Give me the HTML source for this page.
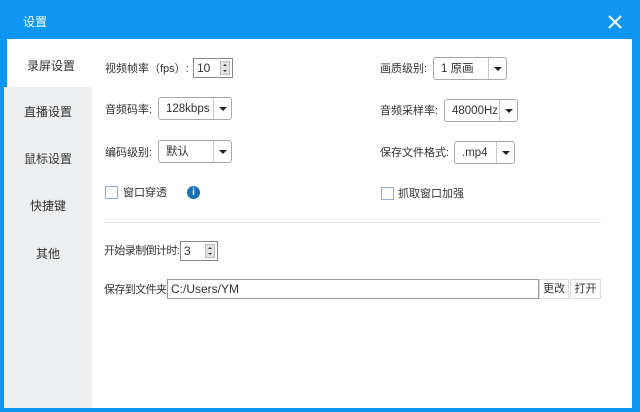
<!DOCTYPE html>
<html><head><meta charset="utf-8"><style>
*{margin:0;padding:0;box-sizing:border-box}
body{width:640px;height:412px;background:#0d97f2;position:relative;overflow:hidden;font-family:"Liberation Sans","Noto Sans CJK SC",sans-serif;font-size:11px;color:#333}
.a{position:absolute}
.t{position:absolute;line-height:14px;white-space:nowrap}
.main{left:7px;top:39px;width:625px;height:369px;background:#fff}
.side{left:4px;top:87px;width:88px;height:321px;background:#eeeff0}
.tab{position:absolute;width:88px;text-align:center;font-size:12px;color:#333;line-height:16px}
.dd{position:absolute;border:1px solid #a8a8a8;border-radius:3px;background:#fff;height:23px;font-size:11.5px}
.dd span{position:absolute;left:7px;top:4px;line-height:14px}
.dd i{position:absolute;top:0;bottom:0;width:1px;background:#c8c8c8}
.dd b{position:absolute;top:9px;width:0;height:0;border-left:4px solid transparent;border-right:4px solid transparent;border-top:4px solid #222}
.sp{position:absolute;border:1px solid #888;background:#fff;height:20px;font-size:12px}
.sp span{position:absolute;left:3px;top:2px;line-height:14px}
.sp em{position:absolute;right:2px;top:2px;width:10px;height:14px;background:#e4e4e4;border:1px solid #bbb}
.sp em:before{content:"";position:absolute;left:2px;top:2px;border-left:2px solid transparent;border-right:2px solid transparent;border-bottom:2px solid #333}
.sp em:after{content:"";position:absolute;left:2px;top:8px;border-left:2px solid transparent;border-right:2px solid transparent;border-top:2px solid #333}
.cb{position:absolute;width:13px;height:13px;border:1px solid #8ab0dc;background:#fff}
.btn{position:absolute;border:1px solid #ddd;background:#fff;height:20px;text-align:center;line-height:18px}
</style></head><body>
<div class="t" style="left:23px;top:15px;color:#fff;font-size:12px">设置</div>
<svg class="a" style="left:608px;top:15px" width="14" height="14"><path d="M1 1L13 13M13 1L1 13" stroke="#fff" stroke-width="2"/></svg>
<div class="a main"></div>
<div class="a side"></div>
<div class="tab" style="left:7px;top:58px">录屏设置</div>
<div class="tab" style="left:4px;top:104px">直播设置</div>
<div class="tab" style="left:4px;top:151px">鼠标设置</div>
<div class="tab" style="left:4px;top:198px">快捷键</div>
<div class="tab" style="left:4px;top:246px">其他</div>

<div class="t" style="left:105px;top:62px">视频帧率（fps）:</div>
<div class="sp" style="left:193px;top:58px;width:40px"><span>10</span><em></em></div>
<div class="t" style="left:105px;top:103px">音频码率:</div>
<div class="dd" style="left:158px;top:97px;width:74px"><span>128kbps</span><i style="left:54px"></i><b style="left:60px"></b></div>
<div class="t" style="left:105px;top:146px">编码级别:</div>
<div class="dd" style="left:158px;top:140px;width:74px"><span>默认</span><i style="left:54px"></i><b style="left:60px"></b></div>
<div class="cb" style="left:105px;top:186px"></div>
<div class="t" style="left:123px;top:186px">窗口穿透</div>
<div class="a" style="left:187px;top:186px;width:13px;height:13px;border-radius:50%;background:#1a6fb8;color:#fff;font-size:10px;font-weight:bold;text-align:center;line-height:13px">i</div>

<div class="t" style="left:380px;top:62px">画质级别:</div>
<div class="dd" style="left:433px;top:57px;width:74px"><span>1 原画</span><i style="left:54px"></i><b style="left:60px"></b></div>
<div class="t" style="left:380px;top:104px">音频采样率:</div>
<div class="dd" style="left:444px;top:99px;width:74px"><span>48000Hz</span><i style="left:54px"></i><b style="left:60px"></b></div>
<div class="t" style="left:380px;top:146px">保存文件格式:</div>
<div class="dd" style="left:454px;top:141px;width:61px"><span>.mp4</span><i style="left:41px"></i><b style="left:47px"></b></div>
<div class="cb" style="left:381px;top:187px"></div>
<div class="t" style="left:398px;top:187px">抓取窗口加强</div>

<div class="a" style="left:104px;top:222px;width:497px;height:1px;background:#e4e4e4"></div>
<div class="t" style="left:104px;top:244px;letter-spacing:-0.6px">开始录制倒计时:</div>
<div class="sp" style="left:180px;top:241px;width:38px"><span>3</span><em></em></div>
<div class="t" style="left:104px;top:283px;letter-spacing:-0.6px">保存到文件夹:</div>
<div class="a" style="left:167px;top:279px;width:372px;height:20px;border:1px solid #999;background:#fff"></div>
<div class="t" style="left:171px;top:282px;font-size:12px">C:/Users/YM</div>
<div class="btn" style="left:539px;top:279px;width:30px">更改</div>
<div class="btn" style="left:570px;top:279px;width:31px">打开</div>
</body></html>
